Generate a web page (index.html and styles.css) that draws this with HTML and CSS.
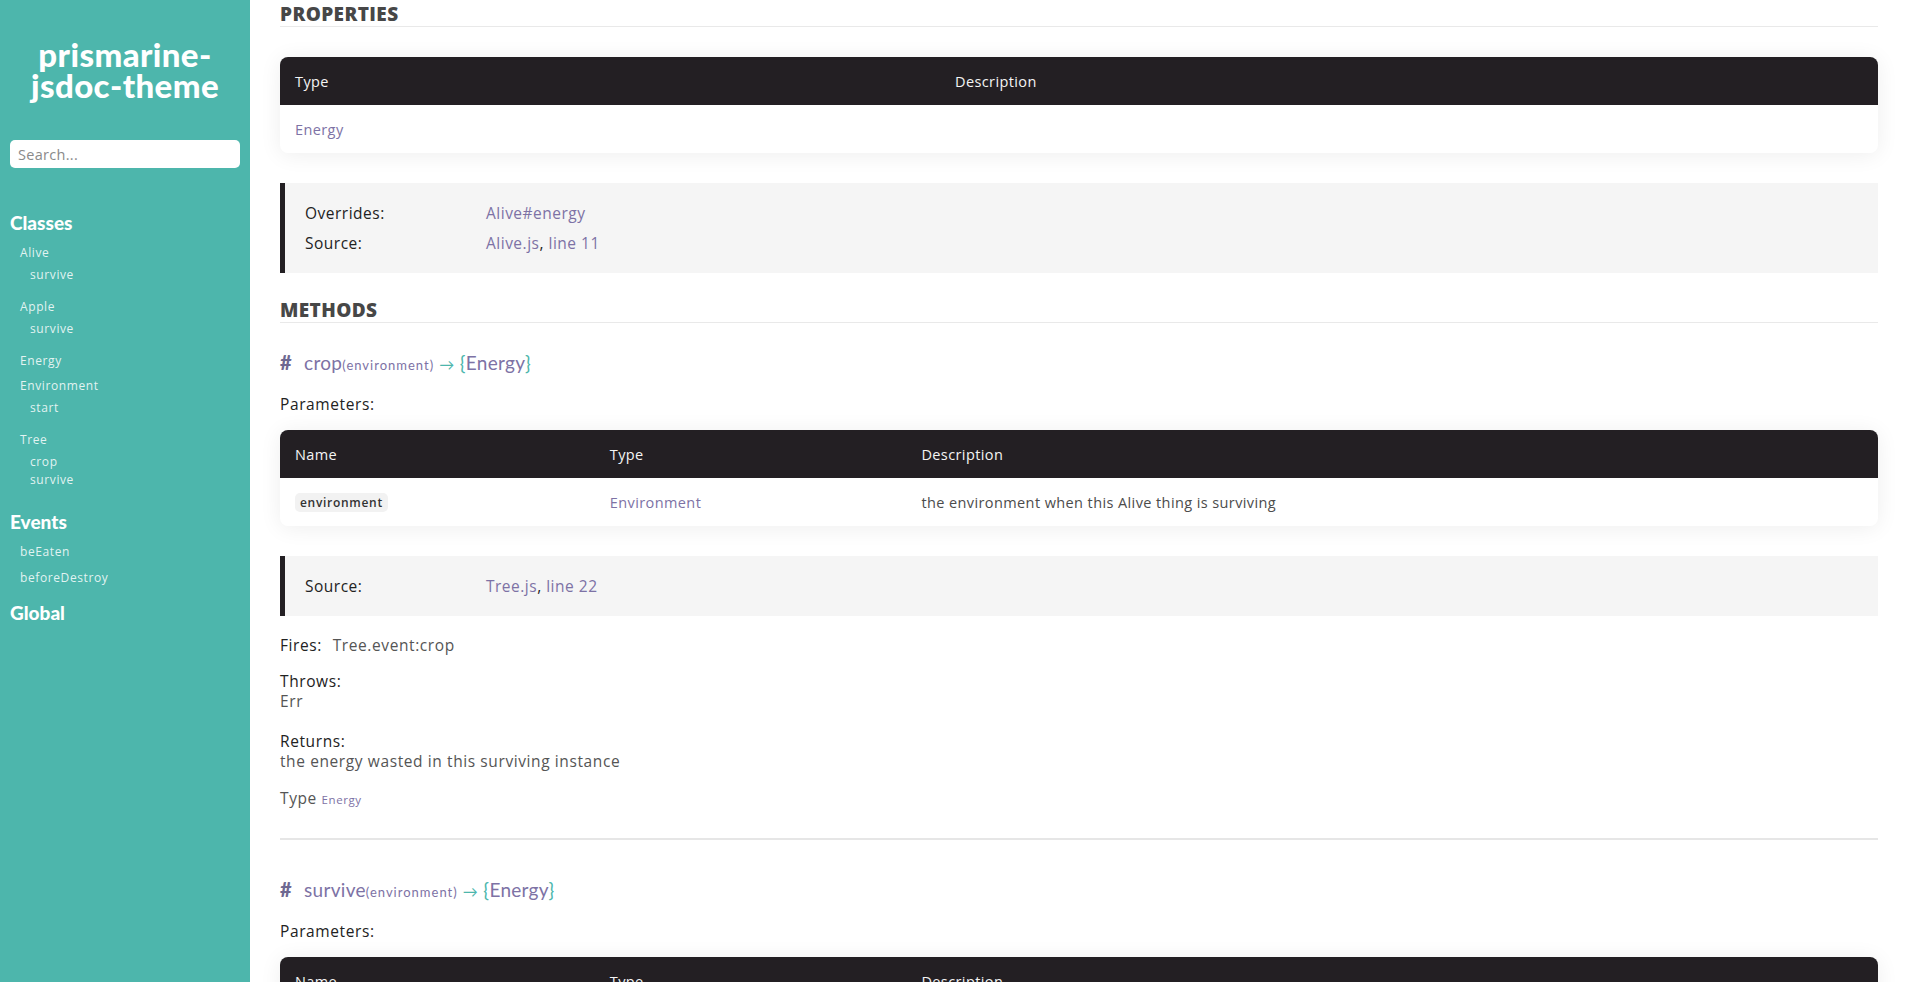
FILE: index.html
```html
<!DOCTYPE html>
<html lang="en">
<head>
    <meta charset="UTF-8">
    <meta name="viewport" content="width=device-width, initial-scale=1.0">
    <title>Tree - prismarine-jsdoc-theme</title>
    <link rel="stylesheet" href="styles.css">
</head>
<body>
    <div class="layout">
        <nav class="sidebar">
            <h2 class="brand">prismarine-<br>jsdoc-theme</h2>
            <input class="search" type="text" placeholder="Search...">

            <h3 class="nav-heading">Classes</h3>
            <ul class="nav-list">
                <li>
                    <a href="#">Alive</a>
                    <ul class="nav-methods"><li><a href="#">survive</a></li></ul>
                </li>
                <li>
                    <a href="#">Apple</a>
                    <ul class="nav-methods"><li><a href="#">survive</a></li></ul>
                </li>
                <li><a href="#">Energy</a></li>
                <li>
                    <a href="#">Environment</a>
                    <ul class="nav-methods"><li><a href="#">start</a></li></ul>
                </li>
                <li>
                    <a href="#">Tree</a>
                    <ul class="nav-methods">
                        <li><a href="#">crop</a></li>
                        <li><a href="#">survive</a></li>
                    </ul>
                </li>
            </ul>

            <h3 class="nav-heading">Events</h3>
            <ul class="nav-list nav-events">
                <li><a href="#">beEaten</a></li>
                <li><a href="#">beforeDestroy</a></li>
            </ul>

            <h3 class="nav-heading">Global</h3>
        </nav>

        <main class="main">
            <h3 class="section-title">Properties</h3>
            <div class="table-card">
                <table class="params">
                    <thead>
                        <tr><th class="col-wide">Type</th><th>Description</th></tr>
                    </thead>
                    <tbody>
                        <tr><td class="type">Energy</td><td></td></tr>
                    </tbody>
                </table>
            </div>

            <dl class="details">
                <div class="detail-row">
                    <dt>Overrides:</dt>
                    <dd><a href="#">Alive#energy</a></dd>
                </div>
                <div class="detail-row">
                    <dt>Source:</dt>
                    <dd><a href="#">Alive.js</a>, <a href="#">line 11</a></dd>
                </div>
            </dl>

            <h3 class="section-title methods-title">Methods</h3>

            <h4 class="name"><span class="hash">#</span> crop<span class="signature">(environment)</span> <span class="arrow">&rarr;</span> <span class="brace">{</span>Energy<span class="brace">}</span></h4>
            <h5 class="sub">Parameters:</h5>
            <div class="table-card">
                <table class="params">
                    <thead>
                        <tr><th class="col-name">Name</th><th class="col-type">Type</th><th>Description</th></tr>
                    </thead>
                    <tbody>
                        <tr>
                            <td><code>environment</code></td>
                            <td class="type">Environment</td>
                            <td class="desc">the environment when this Alive thing is surviving</td>
                        </tr>
                    </tbody>
                </table>
            </div>

            <dl class="details">
                <div class="detail-row">
                    <dt>Source:</dt>
                    <dd><a href="#">Tree.js</a>, <a href="#">line 22</a></dd>
                </div>
            </dl>

            <p class="fires"><strong>Fires:</strong> Tree.event:crop</p>

            <div class="block throws">
                <div class="block-label">Throws:</div>
                <div class="block-text">Err</div>
            </div>

            <div class="block returns">
                <div class="block-label">Returns:</div>
                <div class="block-text">the energy wasted in this surviving instance</div>
            </div>

            <p class="return-type">Type <span class="type-small">Energy</span></p>

            <hr class="divider">

            <h4 class="name name-next"><span class="hash">#</span> survive<span class="signature">(environment)</span> <span class="arrow">&rarr;</span> <span class="brace">{</span>Energy<span class="brace">}</span></h4>
            <h5 class="sub">Parameters:</h5>
            <div class="table-card">
                <table class="params">
                    <thead>
                        <tr><th class="col-name">Name</th><th class="col-type">Type</th><th>Description</th></tr>
                    </thead>
                    <tbody>
                        <tr>
                            <td><code>environment</code></td>
                            <td class="type">Environment</td>
                            <td class="desc">the environment when this Alive thing is surviving</td>
                        </tr>
                    </tbody>
                </table>
            </div>
        </main>
    </div>
</body>
</html>
```

FILE: styles.css
```css
body {
    margin: 0;
    padding: 0;
    background-color: #fff;
    font-family: 'Open Sans', sans-serif;
    color: #222;
    overflow: hidden;
    height: 100vh;
}

a {
    color: #7d72a5;
    text-decoration: none;
}

.layout {
    display: flex;
    height: 100vh;
}

/* Sidebar */

.sidebar {
    width: 250px;
    flex-shrink: 0;
    background-color: #4db6ac;
    padding: 0 10px;
    box-sizing: border-box;
}

.brand {
    margin: 39px 0 0;
    font-family: 'Lato', sans-serif;
    font-weight: 900;
    font-size: 33px;
    line-height: 31px;
    color: #fff;
    text-align: center;
    letter-spacing: 0.4px;
}

.search {
    display: block;
    width: 100%;
    height: 28px;
    margin-top: 39px;
    padding: 0 8px;
    box-sizing: border-box;
    border: none;
    border-radius: 5px;
    font-family: 'Open Sans', sans-serif;
    font-size: 14.5px;
    letter-spacing: 0.3px;
    color: #333;
}

.search::placeholder {
    color: #8a8a8a;
}

.nav-heading {
    margin: 14px 0 9px;
    font-family: 'Lato', sans-serif;
    font-weight: 900;
    font-size: 19px;
    line-height: 24px;
    color: #fff;
}

.sidebar .search + .nav-heading {
    margin-top: 43px;
}

.nav-list,
.nav-methods {
    list-style: none;
    margin: 0;
    padding: 0;
}

.nav-list > li {
    padding-left: 10px;
    margin-bottom: 7px;
}

.nav-events > li {
    margin-bottom: 8px;
}

.nav-methods {
    margin-top: 4px;
    padding-bottom: 7px;
    padding-left: 10px;
}

.sidebar a {
    display: block;
    font-size: 12px;
    line-height: 18px;
    color: rgba(255, 255, 255, 0.85);
    letter-spacing: 0.6px;
}

/* Main content */

.main {
    flex: 1;
    padding: 0 30px;
    min-width: 0;
}

.section-title {
    margin: 2px 0 0;
    font-size: 19px;
    font-weight: 800;
    line-height: 24px;
    text-transform: uppercase;
    color: #474747;
    border-bottom: 1px solid #e9e9e9;
    letter-spacing: 0.4px;
}

.methods-title {
    margin-top: 25px;
}

.table-card {
    margin-top: 30px;
    border-radius: 8px;
    overflow: hidden;
    box-shadow: 0 2px 22px rgba(0, 0, 0, 0.07);
}

.sub + .table-card {
    margin-top: 14px;
}

.params {
    width: 100%;
    border-collapse: collapse;
    font-size: 14.5px;
    letter-spacing: 0.4px;
}

.params th {
    height: 48px;
    padding: 0 15px;
    background-color: #231f23;
    color: #f4f4f4;
    font-weight: 400;
    text-align: left;
}

.params td {
    height: 48px;
    padding: 0 15px;
    text-align: left;
}

.col-wide {
    width: 41.3%;
}

.col-name {
    width: 19.7%;
}

.col-type {
    width: 19.5%;
}

.params .type {
    color: #7d72a5;
}

.params .desc {
    color: #4c4c4c;
}

code {
    display: inline-block;
    padding: 2px 5px;
    background-color: #f2f2f2;
    border-radius: 5px;
    font-family: 'Open Sans', sans-serif;
    font-size: 12px;
    font-weight: 600;
    line-height: 15px;
    color: #333;
    letter-spacing: 0.7px;
}

.details {
    margin: 30px 0 0;
    padding: 15px 0 15px 20px;
    background-color: #f5f5f5;
    border-left: 5px solid #231f23;
}

.detail-row {
    display: flex;
    line-height: 30px;
    font-size: 15.5px;
    letter-spacing: 0.5px;
}

.detail-row dt {
    width: 181px;
    color: #222;
}

.detail-row dd {
    margin: 0;
    color: #222;
}

.name {
    margin: 24px 0 0;
    font-family: 'Lato', sans-serif;
    font-weight: 400;
    font-size: 19px;
    line-height: 30px;
    color: #7d72a5;
    letter-spacing: 0.3px;
}

.name-next {
    margin-top: 34px;
}

.hash {
    font-weight: 900;
    font-size: 20px;
    color: #6e6891;
    margin-right: 7px;
}

.signature {
    font-size: 13px;
    letter-spacing: 1px;
}

.arrow {
    font-size: 15px;
}

.arrow,
.brace {
    color: #4db6ac;
}

.sub {
    margin: 12px 0 0;
    font-size: 15.5px;
    font-weight: 400;
    line-height: 24px;
    color: #222;
    letter-spacing: 0.6px;
}

.fires {
    margin: 17px 0 0;
    font-size: 15.5px;
    line-height: 24px;
    color: #555;
    letter-spacing: 0.6px;
}

.fires strong {
    font-weight: 500;
    color: #222;
    margin-right: 6px;
}

.block {
    font-size: 15.5px;
    line-height: 20px;
    letter-spacing: 0.6px;
}

.throws {
    margin-top: 14px;
}

.returns {
    margin-top: 20px;
}

.block-label {
    color: #222;
}

.block-text {
    color: #555;
}

.return-type {
    margin: 17px 0 0;
    font-size: 15.5px;
    line-height: 20px;
    color: #555;
    letter-spacing: 0.6px;
}

.type-small {
    font-size: 11.5px;
    color: #7d72a5;
}

.divider {
    margin: 28px 0 0;
    border: none;
    border-top: 2px solid #e6e6e6;
}
```
